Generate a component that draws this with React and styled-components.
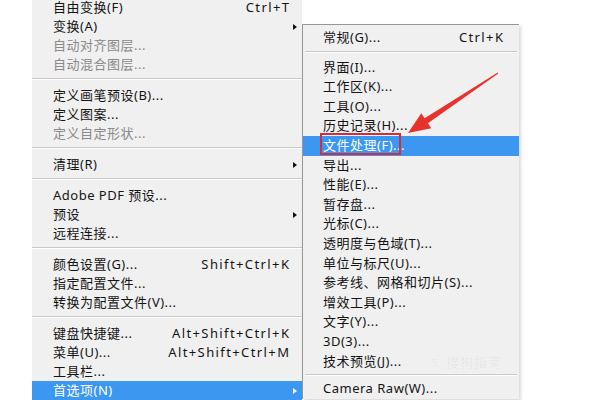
import React from "react";
import styled, { createGlobalStyle } from "styled-components";

const Global = createGlobalStyle`
  html, body { margin: 0; padding: 0; background: #ffffff; }
  body { width: 600px; height: 400px; overflow: hidden; }
  #root { width: 600px; height: 400px; }
`;

const Page = styled.div`
  position: relative;
  width: 600px;
  height: 400px;
  overflow: hidden;
  display: flex;
  align-items: flex-start;
  padding-left: 32px;
  box-sizing: border-box;
  font-family: "Noto Sans", "Noto Sans CJK SC", sans-serif;
  font-size: 13px;
  letter-spacing: 0.5px;
  color: #111;
`;

const MainMenu = styled.div`
  width: 270px;
  margin-top: -2px;
  background: #f0f0f0;
  display: flex;
  flex-direction: column;
`;

const SubMenu = styled.div`
  width: 216px;
  margin-top: 24px;
  background: #f0f0f0;
  border-left: 1px solid #979797;
  border-top: 1px solid #979797;
  box-shadow: 2px 2px 3px rgba(0, 0, 0, 0.15);
  padding-top: 3px;
  display: flex;
  flex-direction: column;
`;

const Row = styled.div`
  height: ${(p) => p.$h}px;
  line-height: ${(p) => p.$h}px;
  display: grid;
  grid-template-columns: 1fr auto ${(p) => p.$arrowCol}px;
  padding-left: ${(p) => p.$pl}px;
  background: ${(p) => (p.$active ? "#3b97f0" : "transparent")};
  color: ${(p) => (p.$active ? "#ffffff" : p.$disabled ? "#8a8a8a" : "#141414")};
  white-space: nowrap;
`;

const Shortcut = styled.span`
  text-align: right;
  letter-spacing: 1.4px;
  margin-right: -1.4px;
`;

const ArrowCell = styled.span`
  display: flex;
  align-items: center;
  padding-left: 4px;
`;

const Tri = styled.span`
  width: 0;
  height: 0;
  border-top: 3.5px solid transparent;
  border-bottom: 3.5px solid transparent;
  border-left: 4px solid ${(p) => (p.$light ? "#ffffff" : "#111111")};
`;

const Sep = styled.div`
  height: ${(p) => p.$h}px;
  display: flex;
  flex-direction: column;
  padding-top: ${(p) => p.$top}px;
  box-sizing: border-box;
  &::before {
    content: "";
    display: block;
    border-top: 1px solid #c9c9c9;
    border-bottom: 1px solid #ffffff;
    margin: ${(p) => p.$inset};
  }
`;

const Highlight = styled.div`
  position: absolute;
  left: 320px;
  top: 133px;
  width: 81px;
  height: 22px;
  box-sizing: border-box;
  border: 2px solid #cf2f3e;
`;

const ArrowSvg = styled.svg`
  position: absolute;
  left: 0;
  top: 0;
  pointer-events: none;
`;

const Watermark = styled.div`
  position: absolute;
  left: 428px;
  top: 352px;
  font-family: "Noto Sans CJK SC", sans-serif;
  font-size: 13px;
  color: rgba(0, 0, 0, 0.05);
  letter-spacing: 1px;
`;

const mainItems = [
  { t: "自由变换(F)", s: "Ctrl+T" },
  { t: "变换(A)", arrow: true },
  { t: "自动对齐图层...", d: true },
  { t: "自动混合图层...", d: true },
  { sep: true },
  { t: "定义画笔预设(B)..." },
  { t: "定义图案..." },
  { t: "定义自定形状...", d: true },
  { sep: true },
  { t: "清理(R)", arrow: true },
  { sep: true },
  { t: "Adobe PDF 预设..." },
  { t: "预设", arrow: true },
  { t: "远程连接..." },
  { sep: true },
  { t: "颜色设置(G)...", s: "Shift+Ctrl+K" },
  { t: "指定配置文件..." },
  { t: "转换为配置文件(V)..." },
  { sep: true },
  { t: "键盘快捷键...", s: "Alt+Shift+Ctrl+K" },
  { t: "菜单(U)...", s: "Alt+Shift+Ctrl+M" },
  { t: "工具栏..." },
  { t: "首选项(N)", arrow: true, active: true },
];

const subItems = [
  { t: "常规(G)...", s: "Ctrl+K" },
  { sep: true, h: 10, top: 3 },
  { t: "界面(I)..." },
  { t: "工作区(K)..." },
  { t: "工具(O)..." },
  { t: "历史记录(H)..." },
  { t: "文件处理(F)...", active: true },
  { t: "导出..." },
  { t: "性能(E)..." },
  { t: "暂存盘..." },
  { t: "光标(C)..." },
  { t: "透明度与色域(T)..." },
  { t: "单位与标尺(U)..." },
  { t: "参考线、网格和切片(S)..." },
  { t: "增效工具(P)..." },
  { t: "文字(Y)..." },
  { t: "3D(3)..." },
  { t: "技术预览(J)..." },
  { sep: true, h: 8, top: 3 },
  { t: "Camera Raw(W)..." },
];

function Menu({ items, rowH, pl, arrowCol, sepH, sepTop, inset }) {
  return items.map((it, i) =>
    it.sep ? (
      <Sep key={i} $h={it.h ?? sepH} $top={it.top ?? sepTop} $inset={inset} />
    ) : (
      <Row
        key={i}
        $h={rowH}
        $pl={pl}
        $arrowCol={arrowCol}
        $active={it.active}
        $disabled={it.d}
      >
        <span>{it.t}</span>
        <Shortcut>{it.s || ""}</Shortcut>
        <ArrowCell>{it.arrow && <Tri $light={it.active} />}</ArrowCell>
      </Row>
    )
  );
}

export default function App() {
  const tip = [408, 133];
  return (
    <>
      <Global />
      <Page>
        <MainMenu>
          <Menu
            items={mainItems}
            rowH={19}
            pl={21}
            arrowCol={13}
            sepH={12}
            sepTop={4}
            inset="0"
          />
        </MainMenu>
        <SubMenu>
          <Menu
            items={subItems}
            rowH={19.6}
            pl={20}
            arrowCol={16}
            sepH={10}
            sepTop={3}
            inset="0 2px 0 2px"
          />
        </SubMenu>
        <Highlight />
        <Watermark>Ⓢ 搜狗指南</Watermark>
        <ArrowSvg width="600" height="400" viewBox="0 0 600 400">
          <polygon
            points={`498.3,73.4 427.9,123.3 431.3,128.3 ${tip[0]},${tip[1]} 421.3,113.3 424.6,118.3 497.7,72.6`}
            fill="#e8322c"
          />
        </ArrowSvg>
      </Page>
    </>
  );
}
